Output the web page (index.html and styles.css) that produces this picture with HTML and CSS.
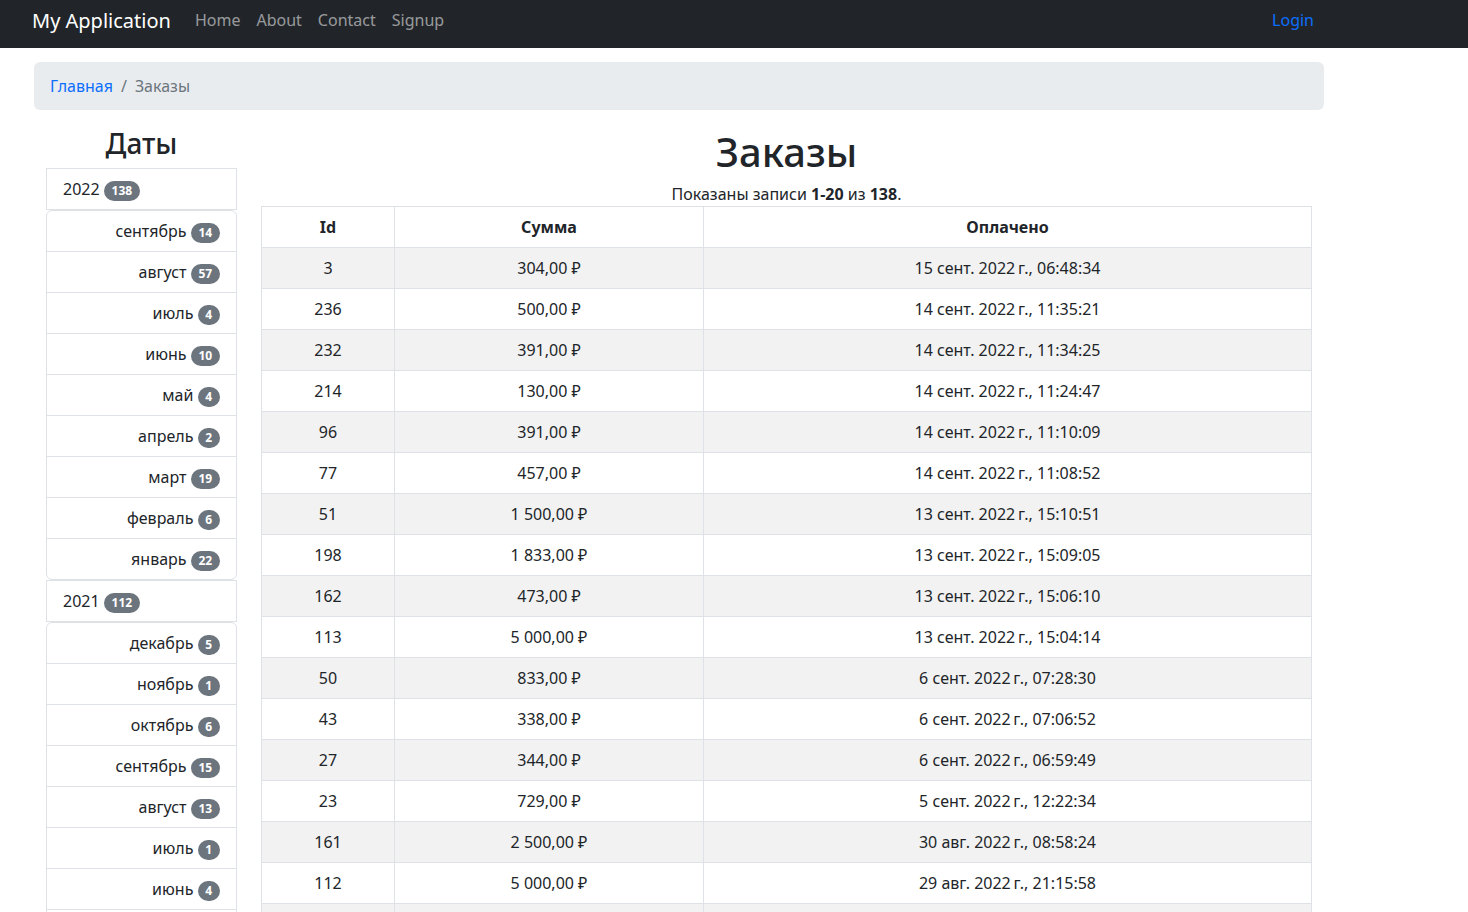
FILE: index.html
```html
<!DOCTYPE html>
<html lang="ru">
<head>
<meta charset="utf-8">
<title>Заказы</title>
<link rel="stylesheet" href="styles.css">
</head>
<body>
<nav class="navbar">
  <div class="nav-inner">
    <a class="brand" href="#">My Application</a>
    <a class="nav-link" href="#">Home</a>
    <a class="nav-link" href="#">About</a>
    <a class="nav-link" href="#">Contact</a>
    <a class="nav-link" href="#">Signup</a>
    <a class="nav-login" href="#">Login</a>
  </div>
</nav>
<div class="container">
  <ol class="breadcrumb">
    <li><a href="#">Главная</a></li>
    <li class="sep">/</li>
    <li class="active">Заказы</li>
  </ol>
  <div class="row">
    <aside class="sidebar">
      <h3 class="side-title">Даты</h3>
      <div class="year">2022 <span class="badge">138</span></div>
      <ul class="months">
        <li>сентябрь <span class="badge">14</span></li>
        <li>август <span class="badge">57</span></li>
        <li>июль <span class="badge">4</span></li>
        <li>июнь <span class="badge">10</span></li>
        <li>май <span class="badge">4</span></li>
        <li>апрель <span class="badge">2</span></li>
        <li>март <span class="badge">19</span></li>
        <li>февраль <span class="badge">6</span></li>
        <li>январь <span class="badge">22</span></li>
      </ul>
      <div class="year">2021 <span class="badge">112</span></div>
      <ul class="months">
        <li>декабрь <span class="badge">5</span></li>
        <li>ноябрь <span class="badge">1</span></li>
        <li>октябрь <span class="badge">6</span></li>
        <li>сентябрь <span class="badge">15</span></li>
        <li>август <span class="badge">13</span></li>
        <li>июль <span class="badge">1</span></li>
        <li>июнь <span class="badge">4</span></li>
        <li>май <span class="badge">18</span></li>
      </ul>
    </aside>
    <main class="main">
      <h1 class="title">Заказы</h1>
      <p class="summary">Показаны записи <b>1-20</b> из <b>138</b>.</p>
      <table class="orders">
        <colgroup><col class="c-id"><col class="c-sum"><col class="c-paid"></colgroup>
        <thead>
          <tr><th>Id</th><th>Сумма</th><th>Оплачено</th></tr>
        </thead>
        <tbody>
          <tr><td>3</td><td>304,00&nbsp;₽</td><td>15 сент. 2022&#8239;г., 06:48:34</td></tr>
          <tr><td>236</td><td>500,00&nbsp;₽</td><td>14 сент. 2022&#8239;г., 11:35:21</td></tr>
          <tr><td>232</td><td>391,00&nbsp;₽</td><td>14 сент. 2022&#8239;г., 11:34:25</td></tr>
          <tr><td>214</td><td>130,00&nbsp;₽</td><td>14 сент. 2022&#8239;г., 11:24:47</td></tr>
          <tr><td>96</td><td>391,00&nbsp;₽</td><td>14 сент. 2022&#8239;г., 11:10:09</td></tr>
          <tr><td>77</td><td>457,00&nbsp;₽</td><td>14 сент. 2022&#8239;г., 11:08:52</td></tr>
          <tr><td>51</td><td>1&nbsp;500,00&nbsp;₽</td><td>13 сент. 2022&#8239;г., 15:10:51</td></tr>
          <tr><td>198</td><td>1&nbsp;833,00&nbsp;₽</td><td>13 сент. 2022&#8239;г., 15:09:05</td></tr>
          <tr><td>162</td><td>473,00&nbsp;₽</td><td>13 сент. 2022&#8239;г., 15:06:10</td></tr>
          <tr><td>113</td><td>5&nbsp;000,00&nbsp;₽</td><td>13 сент. 2022&#8239;г., 15:04:14</td></tr>
          <tr><td>50</td><td>833,00&nbsp;₽</td><td>6 сент. 2022&#8239;г., 07:28:30</td></tr>
          <tr><td>43</td><td>338,00&nbsp;₽</td><td>6 сент. 2022&#8239;г., 07:06:52</td></tr>
          <tr><td>27</td><td>344,00&nbsp;₽</td><td>6 сент. 2022&#8239;г., 06:59:49</td></tr>
          <tr><td>23</td><td>729,00&nbsp;₽</td><td>5 сент. 2022&#8239;г., 12:22:34</td></tr>
          <tr><td>161</td><td>2&nbsp;500,00&nbsp;₽</td><td>30 авг. 2022&#8239;г., 08:58:24</td></tr>
          <tr><td>112</td><td>5&nbsp;000,00&nbsp;₽</td><td>29 авг. 2022&#8239;г., 21:15:58</td></tr>
          <tr><td>109</td><td>500,00&nbsp;₽</td><td>29 авг. 2022&#8239;г., 20:41:12</td></tr>
        </tbody>
      </table>
    </main>
  </div>
</div>
</body>
</html>
```
FILE: styles.css
```css
* { box-sizing: border-box; }
html, body { margin: 0; padding: 0; }
body {
  font-family: "Noto Sans", "Open Sans", "DejaVu Sans", sans-serif;
  font-size: 16px;
  line-height: 24px;
  color: #212529;
  background: #fff;
}
a { text-decoration: none; }

.navbar {
  background: #212529;
  height: 48px;
}
.nav-inner {
  display: flex;
  align-items: center;
  height: 48px;
  margin-left: 32px;
  width: 1290px;
  padding-bottom: 6px;
}
.brand {
  color: #fff;
  font-size: 20px;
  line-height: 30px;
  margin-right: 16px;
}
.nav-link {
  color: rgba(255, 255, 255, 0.55);
  padding: 0 8px;
  line-height: 24px;
  margin-bottom: 2px;
}
.nav-login {
  margin-left: auto;
  margin-bottom: 2px;
  color: #0d6efd;
  padding: 0 8px;
  line-height: 24px;
}

.container {
  margin-left: 34px;
  width: 1290px;
  padding-top: 14px;
}
.breadcrumb {
  list-style: none;
  margin: 0 0 16px;
  padding: 12px 16px;
  background: #e9ecef;
  border-radius: 6px;
  display: flex;
}
.breadcrumb a { color: #0d6efd; }
.breadcrumb .sep { color: #6c757d; padding: 0 8px; }
.breadcrumb .active { color: #6c757d; }

.row {
  display: grid;
  grid-template-columns: 215px 1075px;
}
.sidebar { padding: 0 12px; }
.main { padding: 0 12px; }

.side-title {
  font-size: 28px;
  font-weight: 500;
  line-height: 34px;
  text-align: center;
  margin: 0 0 8px;
}
.year {
  border: 1px solid #dee2e6;
  padding: 8px 16px;
  line-height: 24px;
}
.months {
  list-style: none;
  margin: 0;
  padding: 0;
  border: 1px solid #dee2e6;
  border-radius: 6px;
}
.months li {
  padding: 8px 16px;
  text-align: right;
  border-top: 1px solid #dee2e6;
}
.months li:first-child { border-top: 0; }

.badge {
  display: inline-block;
  padding: 4px 7.8px;
  font-size: 12px;
  font-weight: 700;
  line-height: 1;
  color: #fff;
  background: #6c757d;
  border-radius: 50rem;
}

.title {
  font-size: 40px;
  font-weight: 500;
  line-height: 48px;
  text-align: center;
  margin: 2px 0 6px;
}
.summary {
  text-align: center;
  margin: 0;
}
.orders {
  width: 1050px;
  border-collapse: collapse;
  table-layout: fixed;
}
.c-id { width: 133px; }
.c-sum { width: 309px; }
.c-paid { width: 608px; }
.orders th, .orders td {
  border: 1px solid #dee2e6;
  padding: 8px;
  text-align: center;
  line-height: 24px;
}
.orders th { font-weight: 700; }
.orders tbody tr:nth-child(odd) td { background: #f2f2f2; }
```
